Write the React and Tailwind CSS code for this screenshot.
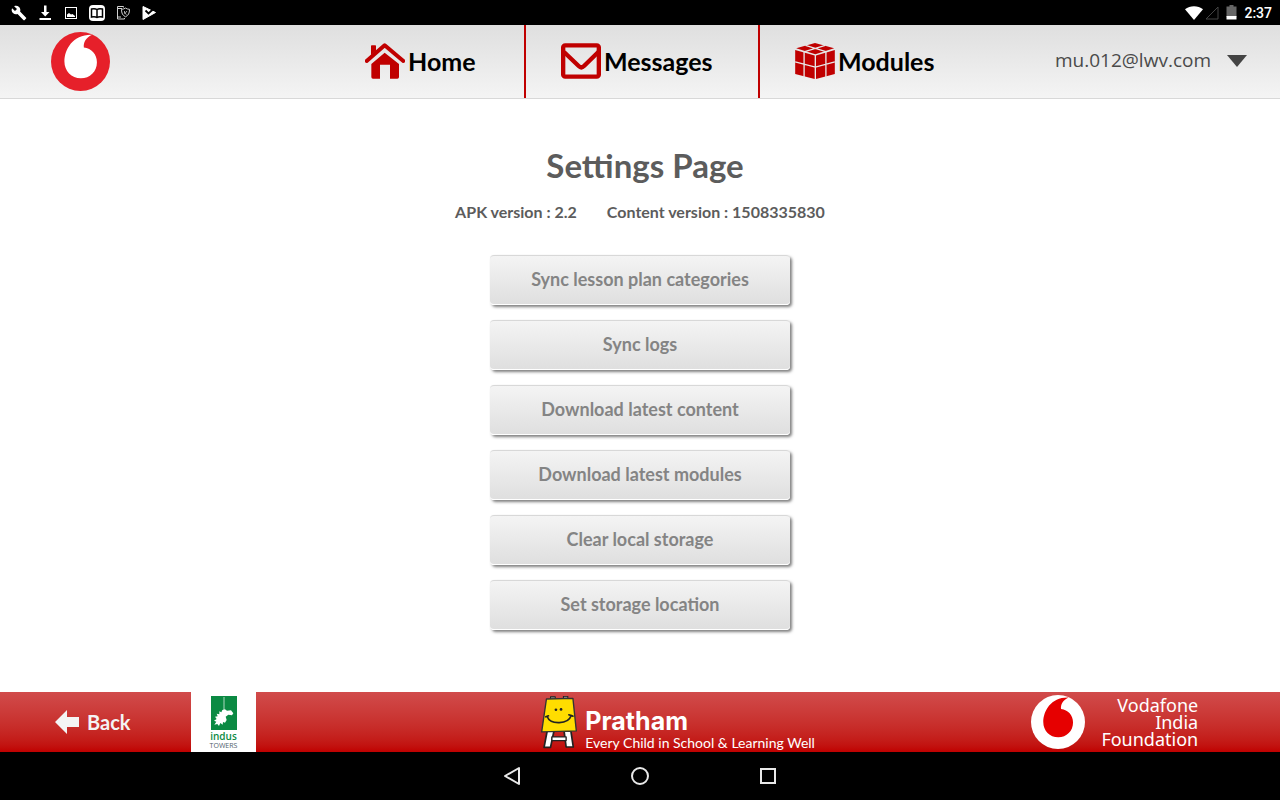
const settingsActions = [
	'Sync lesson plan categories',
	'Sync logs',
	'Download latest content',
	'Download latest modules',
	'Clear local storage',
	'Set storage location',
];

function StatusBar() {
	return (
		<div className="flex h-[25px] items-center justify-between bg-black pr-2 pl-[11px] text-white">
			<div className="flex items-center gap-2.5">
				<svg className="size-4" viewBox="0 0 24 24" fill="currentColor">
					<path d="M22.7 19l-9.1-9.1c.9-2.3.4-5-1.5-6.9-2-2-5-2.4-7.4-1.3L9 6 6 9 1.6 4.7C.4 7.1.9 10.1 2.9 12.1c1.9 1.9 4.6 2.4 6.9 1.5l9.1 9.1c.4.4 1 .4 1.4 0l2.3-2.3c.5-.4.5-1.1.1-1.4z" />
				</svg>
				<svg className="size-4" viewBox="0 0 16 16" fill="currentColor">
					<path d="M7 0.500h2.500V7h3L8.200 11.500 4 7h3zM2.500 13h11.500v2H2.500z" />
				</svg>
				<svg className="size-4" viewBox="0 0 16 16">
					<rect x="2.500" y="2.500" width="11" height="11" fill="none" stroke="currentColor" strokeWidth="1" />
					<path d="M4 12V9.500l2-1.500 2 1.500 1.500-.5 2.500 2v1z" fill="currentColor" />
				</svg>
				<svg className="size-4" viewBox="0 0 16 16">
					<rect x="0" y="0" width="16" height="16" rx="4" fill="currentColor" />
					<path d="M8 4.500C6.500 3.500 4.500 3.500 2.500 4v8c2-.5 4-.5 5.500.5 1.500-1 3.500-1 5.500-.5V4c-2-.5-4-.5-5.500.5zv8" fill="none" stroke="#000" strokeWidth="1.500" />
				</svg>
				<svg className="size-4" viewBox="0 0 16 16" fill="none" stroke="#d0d0d0" strokeWidth="1">
					<path d="M8.500 2.500V1.500H2.500v12.500H9.500V13M2.500 3.500H7M2.500 12H6" />
					<path d="M10.500 3c1 .8 2.300 1.300 4 1.300 0 4-1 6-4 7.500-3-1.500-4-3.500-4-7.500 1.700 0 3-.5 4-1.300z" />
					<path d="M9.500 6v2l2 1.500M12 6l-2.500 3" strokeWidth="0.800" />
				</svg>
				<svg className="size-4" viewBox="0 0 16 16">
					<path d="M2 1.500L14.500 7.500 2 14.500z" fill="currentColor" stroke="currentColor" strokeLinejoin="round" />
					<path d="M4.500 5.500L7.500 8.500 15 1.500" fill="none" stroke="#000" strokeWidth="1.800" />
				</svg>
			</div>
			<div className="flex items-center">
				<svg className="h-3.5 w-[18px]" viewBox="0 0 18 14" fill="currentColor">
					<path d="M9 14L0 3.200C5-.8 13-.8 18 3.200z" />
				</svg>
				<svg className="ml-0.5 size-3.5" viewBox="0 0 14 14">
					<path d="M13 1v12H1z" fill="none" stroke="#444" />
				</svg>
				<svg className="ml-[7px] h-[15px] w-[11px]" viewBox="0 0 11 15">
					<path d="M3.500 0h4v1.500H10.500V12H.5V1.500h3z" fill="#666" />
					<path d="M.5 11h10v3.500H.5z" fill="#fff" />
				</svg>
				<span className="ml-[7px] font-[Roboto,sans-serif] text-sm leading-none font-medium">2:37</span>
			</div>
		</div>
	);
}

function SpeechMark({ disc, mark, className }) {
	return (
		<svg className={className} viewBox="154 97 176 176" role="img" aria-label="Vodafone">
			<circle cx="242" cy="185" r="88" fill={disc} />
			<path
				d="M277 105C258 113 250 128 252 143C275 146 291 163 291 187C291 215 270 235 243 235C215 235 194 213 194 185C194 148 220 103 277 105Z"
				fill={mark}
			/>
		</svg>
	);
}

function HomeIcon() {
	return (
		<svg className="h-9 w-10 shrink-0" viewBox="45 53 120 108" fill="#c00000">
			<path d="M63 62q0-2 2-2h11q2 0 2 2v14L63 90z" />
			<path d="M50 107L104 60L160 107" fill="none" stroke="#c00000" strokeWidth="12" strokeLinecap="round" strokeLinejoin="round" />
			<path d="M64 116L104 82L147 116V155q0 5-5 5H120V118H90V160H69q-5 0-5-5z" />
		</svg>
	);
}

function MessagesIcon() {
	return (
		<svg className="h-9 w-10 shrink-0" viewBox="33 53 120 108" fill="none" stroke="#c00000" strokeWidth="13">
			<rect x="39.500" y="60" width="107" height="94" rx="6" />
			<path d="M42 80L86 122Q94 130 102 122L145 80" strokeWidth="13" />
		</svg>
	);
}

function ModulesIcon() {
	return (
		<svg className="h-9 w-10 shrink-0" viewBox="135 53 120 109">
			<g fill="#c00000">
				<path d="M195 53L253 69L196 87L138 69z" />
				<path d="M135 74L194 91V162L135 147z" />
				<path d="M198 91L255 74V147L198 162z" />
			</g>
			<path
				d="M166 60L228 79M226 60L164 79M162 78V158M228 78V158M135 110L196 126L255 110"
				fill="none"
				stroke="#e8e8e8"
				strokeWidth="4"
			/>
		</svg>
	);
}

function NavLink({ icon, label }) {
	return (
		<a href="#" className="flex items-center gap-[3px] pb-0.5 pl-[35px] text-[25px] leading-8 font-bold text-black">
			{icon}
			{label}
		</a>
	);
}

function Header() {
	return (
		<header className="grid h-[74px] grid-cols-[330fr_196fr_234fr_220fr_300fr] border-b border-[#d8d8d8] bg-linear-to-b from-[#dfdfdf] to-[#f4f4f4]">
			<a href="#" className="flex items-center pl-[51px]">
				<SpeechMark disc="#e6202a" mark="#fff" className="size-[59px]" />
			</a>
			<nav className="col-span-3 grid grid-cols-subgrid">
				<div className="flex border-r-2 border-[#c00000]">
					<NavLink icon={<HomeIcon />} label="Home" />
				</div>
				<div className="flex border-r-2 border-[#c00000]">
					<NavLink icon={<MessagesIcon />} label="Messages" />
				</div>
				<div className="flex">
					<NavLink icon={<ModulesIcon />} label="Modules" />
				</div>
			</nav>
			<button type="button" aria-haspopup="menu" className="flex items-center justify-end gap-4 pr-[33px] pb-0.5 font-['Open_Sans',sans-serif] text-[19px] text-[#4a4a4a]">
				mu.012@lwv.com
				<svg className="h-3 w-5" viewBox="0 0 20 12" fill="#444">
					<path d="M0 0h20L10 12z" />
				</svg>
			</button>
		</header>
	);
}

function PrathamLogo() {
	return (
		<svg className="h-[53px] w-9 shrink-0" viewBox="38 35 106 158" preserveAspectRatio="none" strokeLinejoin="round" strokeLinecap="round">
			<path d="M66 37h14v10H66zM104 36h13v10h-13z" fill="#888" stroke="#222" strokeWidth="3" />
			<path d="M56 140L47 188H66L76 140zM106 140L112 187H133L126 140z" fill="#fff" stroke="#222" strokeWidth="5" />
			<path d="M70 157H112V168H70z" fill="#fff" stroke="#222" strokeWidth="4" />
			<path d="M54 44L132 42L142 139L40 142z" fill="#ffdd00" stroke="#333" strokeWidth="4" />
			<circle cx="82" cy="76" r="4" fill="#222" />
			<circle cx="97" cy="75" r="4" fill="#222" />
			<path d="M56 96C66 122 118 120 127 93M52 97l8-3M120 91l12 4" fill="none" stroke="#222" strokeWidth="5" />
		</svg>
	);
}

function IndusLogo() {
	return (
		<div className="flex w-[65px] shrink-0 flex-col items-center bg-white pt-1 font-['Open_Sans',sans-serif]">
			<svg className="h-[34px] w-[26px]" viewBox="0 0 78 102">
				<path d="M0 0h78v102H0z" fill="#0b8a43" />
				<path d="M39 4V44" stroke="#fff" strokeWidth="3" strokeDasharray="4 2" />
				<path
					d="M34 42L42 40L48 44L60 43L67 52L63 58L52 56L44 62L47 72L42 80L36 78L35 86L28 81L24 90L19 84L10 86L16 77L9 74L17 69L12 62L20 61L17 53L25 55L25 46L31 49z"
					fill="#fff"
				/>
			</svg>
			<span className="text-[10px] leading-3 font-semibold text-[#0b8a43]">indus</span>
			<span className="text-[7px] leading-2 text-[#50606c]">TOWERS</span>
		</div>
	);
}

function Footer() {
	return (
		<footer className="flex h-[60px] bg-linear-to-b from-[#d14b4b] to-[#c00000] text-white">
			<button type="button" className="flex w-[191px] shrink-0 items-center gap-2 pl-[55px] text-xl font-bold text-[#f4f4f4]">
				<svg className="size-6" viewBox="0 0 24 24" fill="currentColor">
					<path d="M0 12L12 0V7H24V17H12V24z" />
				</svg>
				Back
			</button>
			<IndusLogo />
			<div className="grid flex-1 grid-cols-[286fr_auto_217fr_auto_82fr] items-center">
				<div className="col-start-2 flex items-center gap-2">
					<PrathamLogo />
					<div className="pt-[14px] whitespace-nowrap">
						<p className="font-[Inter,sans-serif] text-[25px] leading-7 font-bold">Pratham</p>
						<p className="text-sm leading-4">Every Child in School &amp; Learning Well</p>
					</div>
				</div>
				<div className="col-start-4 flex items-center gap-4">
					<SpeechMark disc="#fff" mark="#e60000" className="size-[54px] shrink-0" />
					<div className="text-right font-['Noto_Sans',sans-serif] text-lg leading-[17px]">
						<p>Vodafone</p>
						<p>India</p>
						<p>Foundation</p>
					</div>
				</div>
			</div>
		</footer>
	);
}

function SystemNav() {
	return (
		<div className="flex h-12 items-center justify-center text-[#e8e8e8]">
			<button type="button" aria-label="Back" className="flex w-32 justify-center">
				<svg className="size-5" viewBox="0 0 20 20" fill="none" stroke="currentColor" strokeWidth="2">
					<path d="M17 2V18L3 10z" strokeLinejoin="round" />
				</svg>
			</button>
			<button type="button" aria-label="Home" className="flex w-32 justify-center">
				<svg className="size-5" viewBox="0 0 20 20" fill="none" stroke="currentColor" strokeWidth="2">
					<circle cx="10" cy="10" r="8" />
				</svg>
			</button>
			<button type="button" aria-label="Recent apps" className="flex w-32 justify-center">
				<svg className="size-5" viewBox="0 0 20 20" fill="none" stroke="currentColor" strokeWidth="2">
					<rect x="3" y="3" width="14" height="14" />
				</svg>
			</button>
		</div>
	);
}

export default function App() {
	return (
		<div className="flex min-h-screen flex-col bg-black font-[Lato,sans-serif]">
			<StatusBar />
			<Header />
			<main className="flex flex-1 flex-col items-center bg-white px-4 pt-[46px] pb-8 text-[#5c5c5c]">
				<h1 className="pl-2.5 text-[33px] leading-10 font-bold">Settings Page</h1>
				<div className="mt-[15px] flex gap-[30px] text-base leading-6 font-bold">
					<p>APK version : 2.2</p>
					<p>Content version : 1508335830</p>
				</div>
				<div className="mt-[31px] flex w-full max-w-[300px] flex-col gap-[15px]">
					{settingsActions.map((action) => (
						<button
							key={action}
							type="button"
							className="h-[50px] rounded-sm border-t border-b border-t-[#d8d8d8] border-b-white bg-linear-to-b from-[#f4f4f4] to-[#dfdfdf] pb-0.5 text-lg font-bold text-[#848484] shadow-[2px_2px_3px_rgba(0,0,0,0.5)]"
						>
							{action}
						</button>
					))}
				</div>
			</main>
			<Footer />
			<SystemNav />
		</div>
	);
}
